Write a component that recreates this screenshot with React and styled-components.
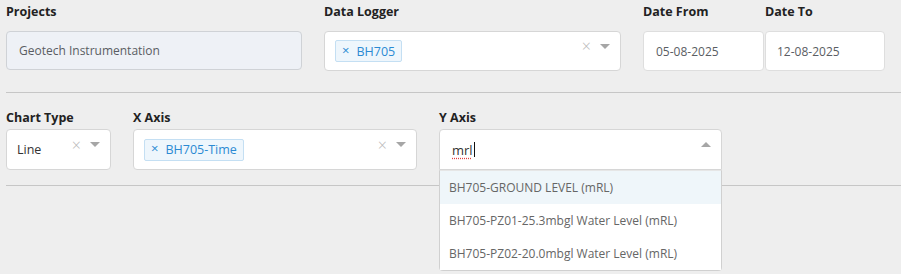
import React from 'react';
import styled, { createGlobalStyle } from 'styled-components';

const GlobalStyle = createGlobalStyle`
  html, body {
    margin: 0;
    padding: 0;
    background: #eeeeee;
    font-family: "Open Sans", "Liberation Sans", sans-serif;
  }
`;

const Page = styled.div`
  width: 901px;
  height: 274px;
  overflow: hidden;
  background: #eeeeee;
  padding-left: 6px;
  box-sizing: border-box;
`;

const Row = styled.div`
  display: flex;
  align-items: flex-start;
  gap: ${(p) => p.$gap || 22}px;
  padding-top: ${(p) => p.$top || 0}px;
`;

const DateGroup = styled.div`
  display: flex;
  gap: 1px;
`;

const Field = styled.div`
  position: relative;
  width: ${(p) => p.$width}px;
  flex: none;
`;

const Label = styled.div`
  font-size: 12.5px;
  font-weight: 700;
  line-height: 18px;
  color: #222;
  margin-bottom: ${(p) => p.$space}px;
  white-space: nowrap;
`;

const Divider = styled.div`
  height: 1px;
  background: #c6c6c6;
  margin-top: ${(p) => p.$top}px;
  margin-right: -10px;
`;

const TextBox = styled.div`
  box-sizing: border-box;
  height: ${(p) => p.$height || 40}px;
  display: flex;
  align-items: center;
  padding-left: ${(p) => p.$pad || 12}px;
  background: ${(p) => (p.$disabled ? '#eef1f6' : '#fff')};
  border: 1px solid ${(p) => (p.$disabled ? '#cfd2d6' : '#dedede')};
  border-radius: 4px;
  font-size: 12px;
  color: #5a5d63;
`;

const Control = styled.div`
  box-sizing: border-box;
  height: ${(p) => p.$height || 40}px;
  display: flex;
  align-items: center;
  padding: 0 10px;
  background: #fff;
  border: 1px solid #d6d6d6;
  border-radius: ${(p) => (p.$open ? '4px 4px 0 0' : '4px')};
`;

const Values = styled.div`
  flex: 1;
  display: flex;
  align-items: center;
  min-width: 0;
  font-size: 12.5px;
  color: #333;
`;

const Tag = styled.span`
  display: inline-flex;
  align-items: center;
  height: 22px;
  box-sizing: border-box;
  padding: 0 6px 0 6px;
  background: #eef6fc;
  border: 1px solid #c4dff3;
  border-radius: 2px;
  color: #2b8ad3;
  font-size: 12.5px;
  gap: 7px;
`;

const TagRemove = styled.span`
  font-size: 13px;
  line-height: 1;
  margin-top: -2px;
`;

const Clear = styled.span`
  color: #b8b8b8;
  font-size: 16px;
  line-height: 1;
  margin-right: 9px;
  margin-top: -10px;
  font-weight: 300;
`;

const Arrow = styled.span`
  width: 0;
  height: 0;
  border-left: 5px solid transparent;
  border-right: 5px solid transparent;
  ${(p) =>
    p.$up
      ? 'border-bottom: 5px solid #a6a6a6;'
      : 'border-top: 5px solid #a6a6a6;'}
  margin-top: -10px;
`;

const Typed = styled.span`
  color: #333;
  font-size: 13px;
  text-decoration: underline dotted #e04040;
  text-underline-offset: 3px;
  padding-left: 2px;
`;

const Caret = styled.span`
  display: inline-block;
  width: 1px;
  height: 15px;
  background: #111;
  margin-left: 1px;
`;

const Menu = styled.div`
  position: absolute;
  left: 0;
  right: 0;
  top: 100%;
  z-index: 2;
  background: #fff;
  border: 1px solid #d0d0d0;
  border-top-color: #e6e6e6;
  border-radius: 0 0 4px 4px;
  box-sizing: border-box;
`;

const Option = styled.div`
  height: 33px;
  display: flex;
  align-items: center;
  padding-left: 9px;
  font-size: 12px;
  color: #666;
  background: ${(p) => (p.$focused ? '#eff6fa' : '#fff')};
`;

const ControlWrap = styled.div`
  position: relative;
`;

const yOptions = [
  'BH705-GROUND LEVEL (mRL)',
  'BH705-PZ01-25.3mbgl Water Level (mRL)',
  'BH705-PZ02-20.0mbgl Water Level (mRL)',
];

const App = () => {
  return (
    <Page>
      <GlobalStyle />
      <Row $top={3}>
        <Field $width={296}>
          <Label $space={10}>Projects</Label>
          <TextBox $disabled $height={39}>Geotech Instrumentation</TextBox>
        </Field>
        <Field $width={297}>
          <Label $space={10}>Data Logger</Label>
          <Control>
            <Values>
              <Tag>
                <TagRemove>×</TagRemove>BH705
              </Tag>
            </Values>
            <Clear>×</Clear>
            <Arrow />
          </Control>
        </Field>
        <DateGroup>
          <Field $width={121}>
            <Label $space={10}>Date From</Label>
            <TextBox>05-08-2025</TextBox>
          </Field>
          <Field $width={120}>
            <Label $space={10}>Date To</Label>
            <TextBox $pad={11}>12-08-2025</TextBox>
          </Field>
        </DateGroup>
      </Row>

      <Divider $top={21} />

      <Row $top={16}>
        <Field $width={105}>
          <Label $space={2}>Chart Type</Label>
          <Control $height={41}>
            <Values>Line</Values>
            <Clear>×</Clear>
            <Arrow />
          </Control>
        </Field>
        <Field $width={284}>
          <Label $space={2}>X Axis</Label>
          <Control $height={41}>
            <Values>
              <Tag>
                <TagRemove>×</TagRemove>BH705-Time
              </Tag>
            </Values>
            <Clear>×</Clear>
            <Arrow />
          </Control>
        </Field>
        <Field $width={283}>
          <Label $space={2}>Y Axis</Label>
          <ControlWrap>
            <Control $height={41} $open>
              <Values>
                <Typed>mrl</Typed>
                <Caret />
              </Values>
              <Arrow $up />
            </Control>
            <Menu>
              {yOptions.map((o, i) => (
                <Option key={o} $focused={i === 0}>
                  {o}
                </Option>
              ))}
            </Menu>
          </ControlWrap>
        </Field>
      </Row>

      <Divider $top={15} />
    </Page>
  );
};

export default App;
